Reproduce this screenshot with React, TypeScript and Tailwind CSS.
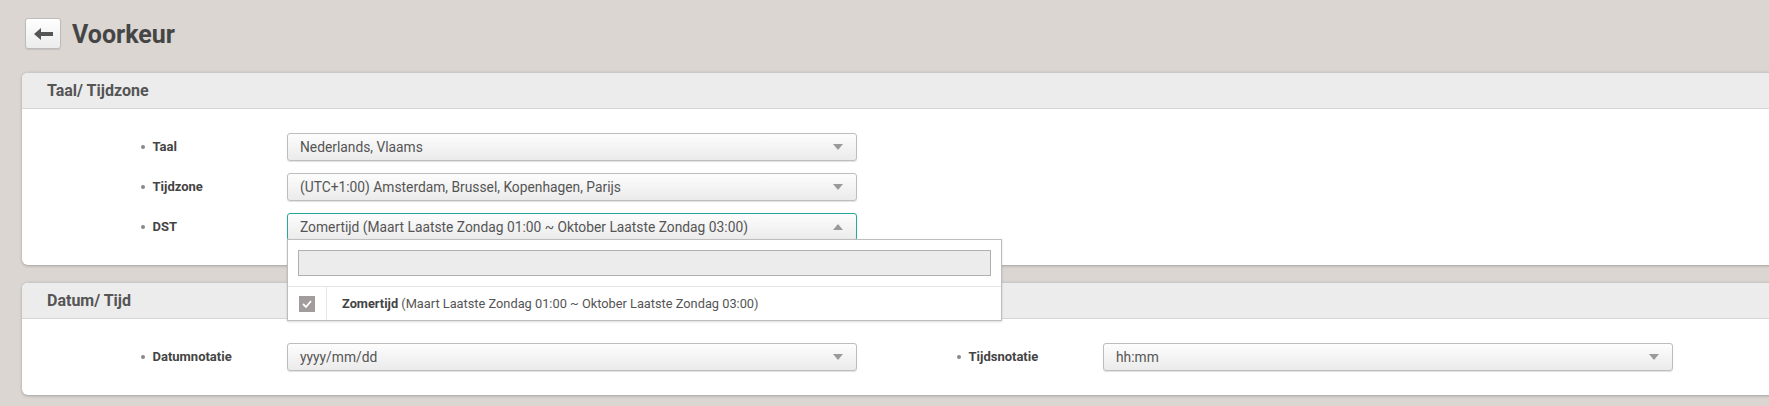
import { useState } from "react";

const font = { fontFamily: "Roboto, 'Liberation Sans', sans-serif" };

function Arrow({ up }: { up?: boolean }) {
  return (
    <svg className="h-[6px] w-[10px]" viewBox="0 0 10 6">
      <path d={up ? "M5 0L10 6H0z" : "M0 0h10L5 6z"} fill="#9a9a9a" />
    </svg>
  );
}

function Select({
  value,
  open,
  width = "w-[570px]",
}: {
  value: string;
  open?: boolean;
  width?: string;
}) {
  return (
    <div
      className={`flex h-[28px] ${width} items-center justify-between rounded-[3px] border bg-gradient-to-b from-[#fdfdfd] to-[#ebebeb] pl-[12px] pr-[13px] text-[13.8px] text-[#555] shadow-[0_1px_1px_rgba(0,0,0,0.12)] ${
        open ? "border-[#2aa79b]" : "border-[#bdbdbd]"
      }`}
    >
      <span>{value}</span>
      <Arrow up={open} />
    </div>
  );
}

function Label({ text }: { text: string }) {
  return (
    <div className="flex w-[146px] items-center gap-[8px] text-[13px] font-bold text-[#444]">
      <span className="h-[3.5px] w-[3.5px] rounded-full bg-[#888]" />
      <span>{text}</span>
    </div>
  );
}

function Panel({
  title,
  children,
}: {
  title: string;
  children: React.ReactNode;
}) {
  return (
    <section className="-mr-[20px] ml-[22px] rounded-[6px] border-t border-[#c9c9c9] bg-white shadow-[0_1px_3px_rgba(0,0,0,0.25)]">
      <header className="flex h-[36px] items-center rounded-t-[6px] border-b border-[#d6d6d6] bg-[#ececec] pl-[25px] text-[16px] font-bold text-[#555]">
        {title}
      </header>
      <div className="pb-[24px] pl-[119px] pt-[24px]">{children}</div>
    </section>
  );
}

export default function App() {
  const [open] = useState(true);
  const dst = "Zomertijd (Maart Laatste Zondag 01:00 ~ Oktober Laatste Zondag 03:00)";

  return (
    <div className="min-h-screen overflow-hidden bg-[#dbd6d2] pb-[20px]" style={font}>
      {/* Title bar */}
      <div className="mt-[18px] flex h-[31px] items-center gap-[11px] pl-[25px]">
        <button className="flex h-[31px] w-[36px] items-center justify-center rounded-[3px] border border-[#bcbcbc] bg-gradient-to-b from-white to-[#ececec] shadow-[0_1px_1px_rgba(0,0,0,0.1)]">
          <svg className="h-[12px] w-[19px]" viewBox="0 0 19 12">
            <path d="M0 6L7 0v4h12v4H7v4z" fill="#555" />
          </svg>
        </button>
        <h1 className="mt-[2px] text-[25px] font-bold leading-none text-[#454545]">Voorkeur</h1>
      </div>

      <div className="mt-[23px] flex flex-col gap-[17px]">
        <Panel title="Taal/ Tijdzone">
          <div className="flex flex-col gap-[12px]">
            <div className="flex items-center">
              <Label text="Taal" />
              <Select value="Nederlands, Vlaams" />
            </div>
            <div className="flex items-center">
              <Label text="Tijdzone" />
              <Select value="(UTC+1:00) Amsterdam, Brussel, Kopenhagen, Parijs" />
            </div>
            <div className="flex items-center">
              <Label text="DST" />
              <div className="relative">
                <Select value={dst} open={open} />
                {open && (
                  <div className="absolute left-0 top-[26px] z-20 w-[715px] border border-[#bdbdbd] bg-white shadow-[0_1px_2px_rgba(0,0,0,0.15)]">
                    <div className="px-[10px] pb-[10px] pt-[10px]">
                      <div className="h-[26px] border border-[#b0b0b0] bg-[#ececec]" />
                    </div>
                    <div className="flex h-[34px] items-center border-t border-[#e6e6e6]">
                      <div className="flex h-full w-[39px] items-center justify-center border-r border-[#e6e6e6]">
                        <span className="flex h-[16px] w-[16px] items-center justify-center bg-[#a29c9c]">
                          <svg className="h-[8px] w-[10px]" viewBox="0 0 10 8">
                            <path d="M1 4l3 3 5-6" fill="none" stroke="#fff" strokeWidth="1.8" />
                          </svg>
                        </span>
                      </div>
                      <span className="pl-[15px] text-[12.8px] text-[#555]">
                        <b className="text-[#444]">Zomertijd</b> (Maart Laatste Zondag 01:00 ~ Oktober Laatste Zondag 03:00)
                      </span>
                    </div>
                  </div>
                )}
              </div>
            </div>
          </div>
        </Panel>

        <Panel title="Datum/ Tijd">
          <div className="flex items-center">
            <Label text="Datumnotatie" />
            <Select value="yyyy/mm/dd" />
            <div className="ml-[100px] flex items-center">
              <Label text="Tijdsnotatie" />
              <Select value="hh:mm" />
            </div>
          </div>
        </Panel>
      </div>
    </div>
  );
}
